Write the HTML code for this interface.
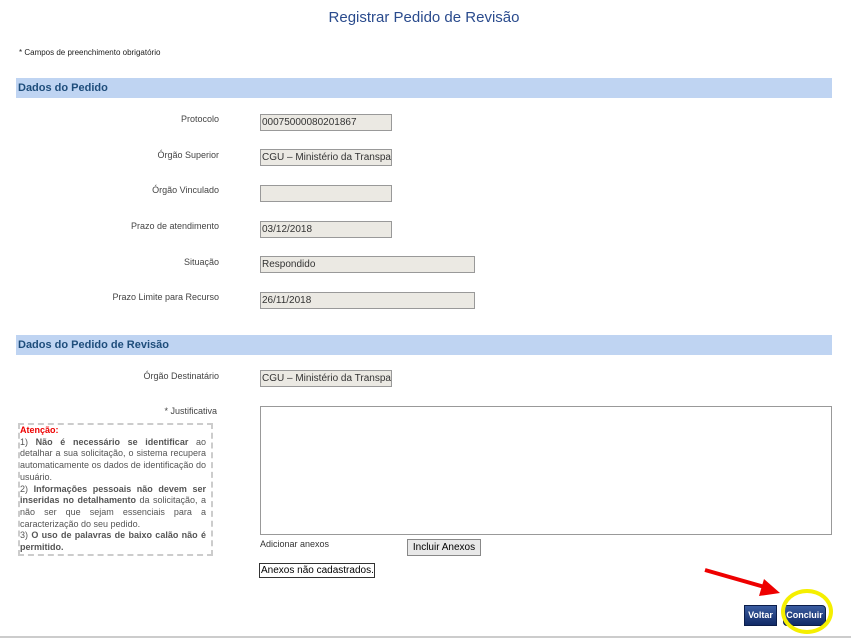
<!DOCTYPE html><html><head><style>
body{margin:0;width:851px;height:640px;background:#fff;font-family:"Liberation Sans",Arial,sans-serif;position:relative;overflow:hidden}
.a{position:absolute}
.t{font-size:15px;color:#2a4b8d;left:0;width:848px;text-align:center;top:9px}
.bar{left:16px;width:816px;height:20px;background:#bfd4f2;font-size:11px;font-weight:bold;color:#1e4d7b;line-height:20px;text-indent:2px}
.l{font-size:9px;color:#444;width:219px;left:0;text-align:right}
.i{left:260px;height:17px;background:#ebe9e3;border:1px solid #999;box-sizing:border-box;font-size:10px;color:#333;line-height:15px;padding-left:1px;white-space:nowrap;overflow:hidden}
.btn{background:linear-gradient(#3a5ca0,#112a66);color:#fff;font-size:9px;font-weight:bold;text-align:center;line-height:18px;height:19px;border:1px solid #0b1d4a}
</style></head><body>
<div class="a t">Registrar Pedido de Revisão</div>
<div class="a" style="left:19px;top:48px;font-size:8px;color:#222">* Campos de preenchimento obrigatório</div>
<div class="a bar" style="top:78px">Dados do Pedido</div>
<div class="a l" style="top:114px">Protocolo</div><div class="a i" style="top:114px;width:132px">00075000080201867</div>
<div class="a l" style="top:150px">Órgão Superior</div><div class="a i" style="top:149px;width:132px">CGU – Ministério da Transparência</div>
<div class="a l" style="top:185px">Órgão Vinculado</div><div class="a i" style="top:185px;width:132px"></div>
<div class="a l" style="top:221px">Prazo de atendimento</div><div class="a i" style="top:221px;width:132px">03/12/2018</div>
<div class="a l" style="top:257px">Situação</div><div class="a i" style="top:256px;width:215px">Respondido</div>
<div class="a l" style="top:292px">Prazo Limite para Recurso</div><div class="a i" style="top:292px;width:215px">26/11/2018</div>
<div class="a bar" style="top:335px">Dados do Pedido de Revisão</div>
<div class="a l" style="top:371px">Órgão Destinatário</div><div class="a i" style="top:370px;width:132px">CGU – Ministério da Transparência</div>
<div class="a l" style="top:406px;left:-2px">* Justificativa</div>
<div class="a" style="left:260px;top:406px;width:572px;height:129px;border:1px solid #999;box-sizing:border-box"></div>
<div class="a" style="left:18px;top:423px;width:195px;height:133px;border:2px dashed #ccc;box-sizing:border-box;font-size:9px;color:#555;line-height:11.7px;text-align:justify;padding:0 5px 0 0">
<span style="color:#e00;font-weight:bold">Atenção:</span><br>1) <b>Não é necessário se identificar</b> ao detalhar a sua solicitação, o sistema recupera automaticamente os dados de identificação do usuário.<br>2) <b>Informações pessoais não devem ser inseridas no detalhamento</b> da solicitação, a não ser que sejam essenciais para a caracterização do seu pedido.<br>3) <b>O uso de palavras de baixo calão não é permitido.</b></div>
<div class="a" style="left:260px;top:539px;font-size:9px;color:#333">Adicionar anexos</div>
<div class="a" style="left:407px;top:539px;width:74px;height:17px;background:#e8e8e8;border:1px solid #888;box-sizing:border-box;font-size:10px;text-align:center;line-height:15px">Incluir Anexos</div>
<div class="a" style="left:259px;top:563px;width:116px;height:15px;border:1px solid #333;box-sizing:border-box;font-size:10px;line-height:13px;padding-left:1px">Anexos não cadastrados.</div>
<svg class="a" style="left:700px;top:562px" width="90" height="40"><line x1="5" y1="8" x2="68" y2="26" stroke="#e00" stroke-width="4"/><polygon points="80,31 64,17 59,34" fill="#e00"/></svg>
<div class="a btn" style="left:744px;top:605px;width:31px">Voltar</div>
<div class="a btn" style="left:783px;top:605px;width:41px;border-radius:4px">Concluir</div>
<div class="a" style="left:781px;top:589px;width:52px;height:45px;border:4px solid #f5ef00;border-radius:50%;box-sizing:border-box"></div>
<div class="a" style="left:0;top:636px;width:851px;height:2px;background:#ccc"></div>
</body></html>
